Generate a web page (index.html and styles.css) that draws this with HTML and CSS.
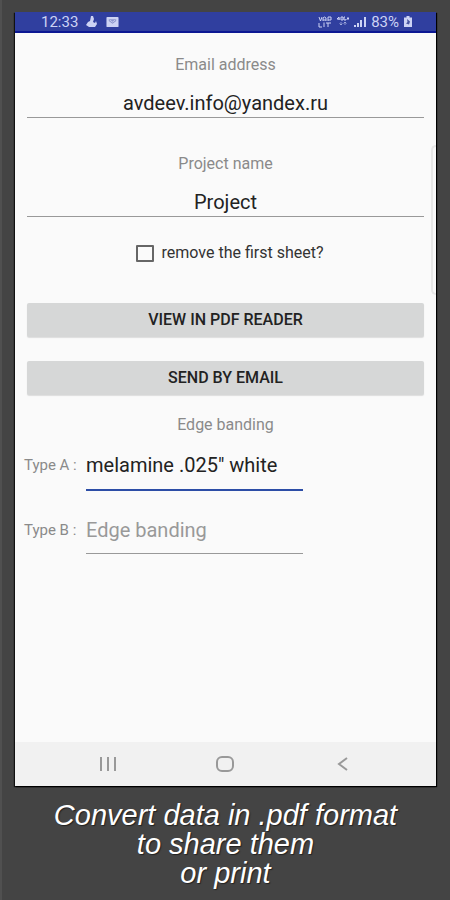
FILE: index.html
```html
<!DOCTYPE html>
<html lang="en">
<head>
<meta charset="utf-8">
<meta name="viewport" content="width=device-width, initial-scale=1">
<title>Send project</title>
<link rel="stylesheet" href="styles.css">
</head>
<body>
<main class="phone">
  <header class="status">
    <div class="status-group">
      <span>12:33</span>
      <svg class="icon-app" width="12" height="12" viewBox="0 0 12 12"><path d="M5 0h2l1 3-1 3 2 1 1-2 1 3-2 3H3L0 9l2-3 2-1z"/></svg>
      <svg class="icon-mail" width="13" height="12" viewBox="0 0 14 12"><rect x="0.5" y="0.5" width="13" height="11" rx="1"/><path class="shade" d="M3 3h8v2L7 8 3 5z"/><path class="stroke" d="M4 4l3 2 3-2"/></svg>
    </div>
    <div class="status-group status-right">
      <svg width="14" height="12" viewBox="0 0 14 12"><path class="stroke" d="M1 1l1.500 4L4 1M5 5V2q1.500-2 3 0v3M5 4h3M10 5V1h3v3h-3M1 7v4h3M6 6.500v4.500M8 7h4M10 7v4M13 7h-1"/></svg>
      <svg width="12" height="12" viewBox="0 0 12 12"><path class="stroke" d="M2 4V1L0 3h3M4 1h2v3H4zM8 1h-1v3h2V3M10 2.500h2M11 1v3"/><path class="stroke dim" d="M4 6v3M2.500 7.500L4 9l1.500-1.500M8 9V6M6.500 7.500L8 6l1.500 1.500"/></svg>
      <svg width="12" height="12" viewBox="0 0 12 12"><path d="M0 9h2v2H0zM3 7h2v4H3zM6 4h2v7H6zM10 1h2v10h-2z"/></svg>
      <span>83%</span>
      <svg width="8" height="11" viewBox="0 0 8 11"><path d="M2.500 0h3v1.500H8V11H0V1.500h2.500z"/><path class="cut" d="M3 3l3 2.500-1 3-3-1 1.500-1.500z"/></svg>
    </div>
  </header>

  <form class="form">
    <div class="field">
      <label for="email">Email address</label>
      <input class="line-input" id="email" type="text" value="avdeev.info@yandex.ru">
    </div>
    <div class="field">
      <label for="project">Project name</label>
      <input class="line-input" id="project" type="text" value="Project">
    </div>
    <label class="check"><input type="checkbox">remove the first sheet?</label>
    <div class="actions">
      <button type="button">VIEW IN PDF READER</button>
      <button type="button">SEND BY EMAIL</button>
    </div>
    <fieldset class="banding">
      <legend>Edge banding</legend>
      <div class="type-row">
        <label for="type-a">Type A :</label>
        <input class="line-input active" id="type-a" type="text" value="melamine .025&quot; white">
      </div>
      <div class="type-row spaced">
        <label for="type-b">Type B :</label>
        <input class="line-input" id="type-b" type="text" placeholder="Edge banding">
      </div>
    </fieldset>
    <div class="edge-handle"></div>
  </form>

  <nav class="navbar">
    <button type="button" aria-label="Recent apps"><svg width="18" height="16" viewBox="0 0 18 16"><path d="M2 1v14M9 1v14M16 1v14"/></svg></button>
    <button type="button" aria-label="Home"><svg width="18" height="16" viewBox="0 0 18 16"><rect x="1" y="1" width="16" height="14" rx="5"/></svg></button>
    <button type="button" aria-label="Back"><svg width="18" height="16" viewBox="0 0 18 16"><path d="M13 2L5 8l8 6"/></svg></button>
  </nav>
</main>
<p class="caption">Convert data in .pdf format<br>to share them<br>or print</p>
</body>
</html>
```
FILE: styles.css
```css
* { box-sizing: border-box; }
body {
  margin: 0;
  min-height: 100vh;
  padding: 12px 14px 0 15px;
  display: flex;
  flex-direction: column;
  background: #444;
  font-family: Roboto, sans-serif;
  box-shadow: inset 2px 0 #505050;
}
.phone {
  flex: 1;
  display: flex;
  flex-direction: column;
  background: #fafafa;
  box-shadow: 1px 1px 1px #000, -1px 1px 1px #111;
}
.status {
  height: 21px;
  padding: 0 24px 0 26px;
  display: flex;
  justify-content: space-between;
  background: #303f9f;
  border-bottom: 2px solid #0c1893;
  color: #cdd3f4;
  font-size: 15px;
  line-height: 20px;
}
.status-group { display: flex; align-items: center; gap: 8px; }
.status-right { gap: 5px; }
.status svg { fill: #cdd3f4; }
.status .cut { fill: #46539f; }
.status .shade { fill: #8c96cc; }
.status .stroke { fill: none; stroke: #cdd3f4; stroke-width: 1; }
.status .dim { opacity: 0.6; }
.form {
  position: relative;
  flex: 1;
  padding: 22px 12px 0;
}
.field { text-align: center; margin-bottom: 36px; }
.field label, legend, .type-row label {
  color: #8a8a8a;
  font-size: 16px;
  line-height: 20px;
}
.field label { display: block; }
.line-input {
  display: block;
  width: 100%;
  height: 43px;
  padding: 13px 0 0;
  border: 0;
  border-bottom: 1px solid #999;
  border-radius: 0;
  background: transparent;
  color: #222;
  font: 20px/28px Roboto, sans-serif;
  text-align: center;
  outline: 0;
}
.line-input::placeholder { color: #999; opacity: 1; }
.check {
  display: flex;
  justify-content: center;
  align-items: center;
  gap: 8px;
  margin-top: -10px;
  padding-left: 8px;
  color: #333;
  font-size: 16px;
  line-height: 20px;
}
.check input {
  appearance: none;
  width: 18px;
  height: 17px;
  margin: 0;
  border: 2px solid #666;
  border-radius: 1px;
}
.actions { display: grid; gap: 24px; margin-top: 40px; }
.actions button {
  height: 34px;
  padding: 0;
  border: 0;
  border-radius: 2px;
  background: #d6d7d7;
  box-shadow: 0 1px 1px #ddd;
  color: #222;
  font: 500 16px/20px Roboto, sans-serif;
}
.banding { margin: 20px 0 0; padding: 0; border: 0; min-width: 0; }
legend { margin: 0 auto; padding: 0; }
.type-row {
  display: grid;
  grid-template-columns: 62px 1fr;
  margin: 0 121px 0 -3px;
}
.type-row label { align-self: center; padding-top: 4px; font-size: 15px; }
.type-row .line-input {
  height: 63px;
  padding: 15px 0 0;
  text-align: left;
}
.type-row .line-input.active {
  height: 56px;
  padding: 6px 0 0;
  border-bottom: 2px solid #2c4da6;
}
.type-row.spaced label { padding-top: 15px; }
.edge-handle {
  position: absolute;
  top: 112px;
  right: 0;
  width: 5px;
  height: 150px;
  border: 2px solid #e8e8e8;
  border-right: 0;
  border-radius: 5px 0 0 5px;
}
.navbar {
  height: 44px;
  padding: 0 34px;
  display: grid;
  grid-template-columns: repeat(3, 1fr);
  background: #f1f1f1;
}
.navbar button {
  display: flex;
  align-items: center;
  justify-content: center;
  padding: 0;
  border: 0;
  background: transparent;
}
.navbar svg { fill: none; stroke: #999; stroke-width: 2; }
.caption {
  margin: 0;
  padding: 15px 0 12px;
  color: #fff;
  font: italic 29px/29px "Liberation Sans", sans-serif;
  text-align: center;
  text-shadow: 1px 1px 1px #222;
}
```
